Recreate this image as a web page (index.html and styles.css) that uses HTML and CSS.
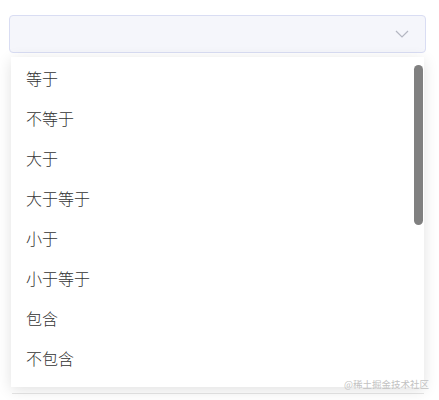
FILE: index.html
```html
<!DOCTYPE html>
<html lang="zh">
<head>
  <meta charset="UTF-8"/>
  <title>Select</title>
  <link rel="stylesheet" href="styles.css">
</head>
<body>
  <div class="select">
    <div class="select-input">
      <svg class="arrow" width="14" height="8" viewBox="0 0 14 8">
        <path d="M1 1 L7 7 L13 1" fill="none" stroke="#b4b7c2" stroke-width="1.2"/>
      </svg>
    </div>

    <div class="dropdown">
      <ul class="options">
        <li>等于</li>
        <li>不等于</li>
        <li>大于</li>
        <li>大于等于</li>
        <li>小于</li>
        <li>小于等于</li>
        <li>包含</li>
        <li>不包含</li>
      </ul>
      <div class="scroll-thumb"></div>
    </div>
    <div class="under-line"></div>

    <span class="watermark">@稀土掘金技术社区</span>
  </div>
</body>
</html>
```

FILE: styles.css
```css
* {
  margin: 0;
  padding: 0;
  box-sizing: border-box;
}

body {
  width: 439px;
  height: 400px;
  background: #fff;
  font-family: 'Noto Sans CJK SC', sans-serif;
  overflow: hidden;
}

.select {
  position: relative;
  height: 400px;
  padding: 15px 13px 0 9px;
}

.select-input {
  height: 38px;
  border: 1.5px solid #d9ddf3;
  border-radius: 4px;
  background: #f5f6fb;
  display: flex;
  align-items: center;
  justify-content: flex-end;
  padding-right: 16px;
}

.arrow {
  display: block;
}

.dropdown {
  position: relative;
  margin: 4px 2px 0 2px;
  height: 330px;
  background: #fff;
  box-shadow: 0 3px 14px rgba(0, 0, 0, 0.12);
  overflow: hidden;
}

.options {
  list-style: none;
  padding-top: 1px;
}

.options li {
  height: 40px;
  line-height: 40px;
  padding-left: 15px;
  font-size: 16px;
  font-weight: 300;
  color: #333;
}

.scroll-thumb {
  position: absolute;
  top: 8px;
  right: 1px;
  width: 9px;
  height: 160px;
  border-radius: 5px;
  background: #808080;
}

.watermark {
  position: absolute;
  top: 377px;
  left: 344px;
  font-size: 9.5px;
  line-height: 14px;
  color: #c2c2c2;
  white-space: nowrap;
}

.under-line {
  margin: 6px 2px 0 3px;
  height: 1px;
  background: #e6e6e6;
}
```
